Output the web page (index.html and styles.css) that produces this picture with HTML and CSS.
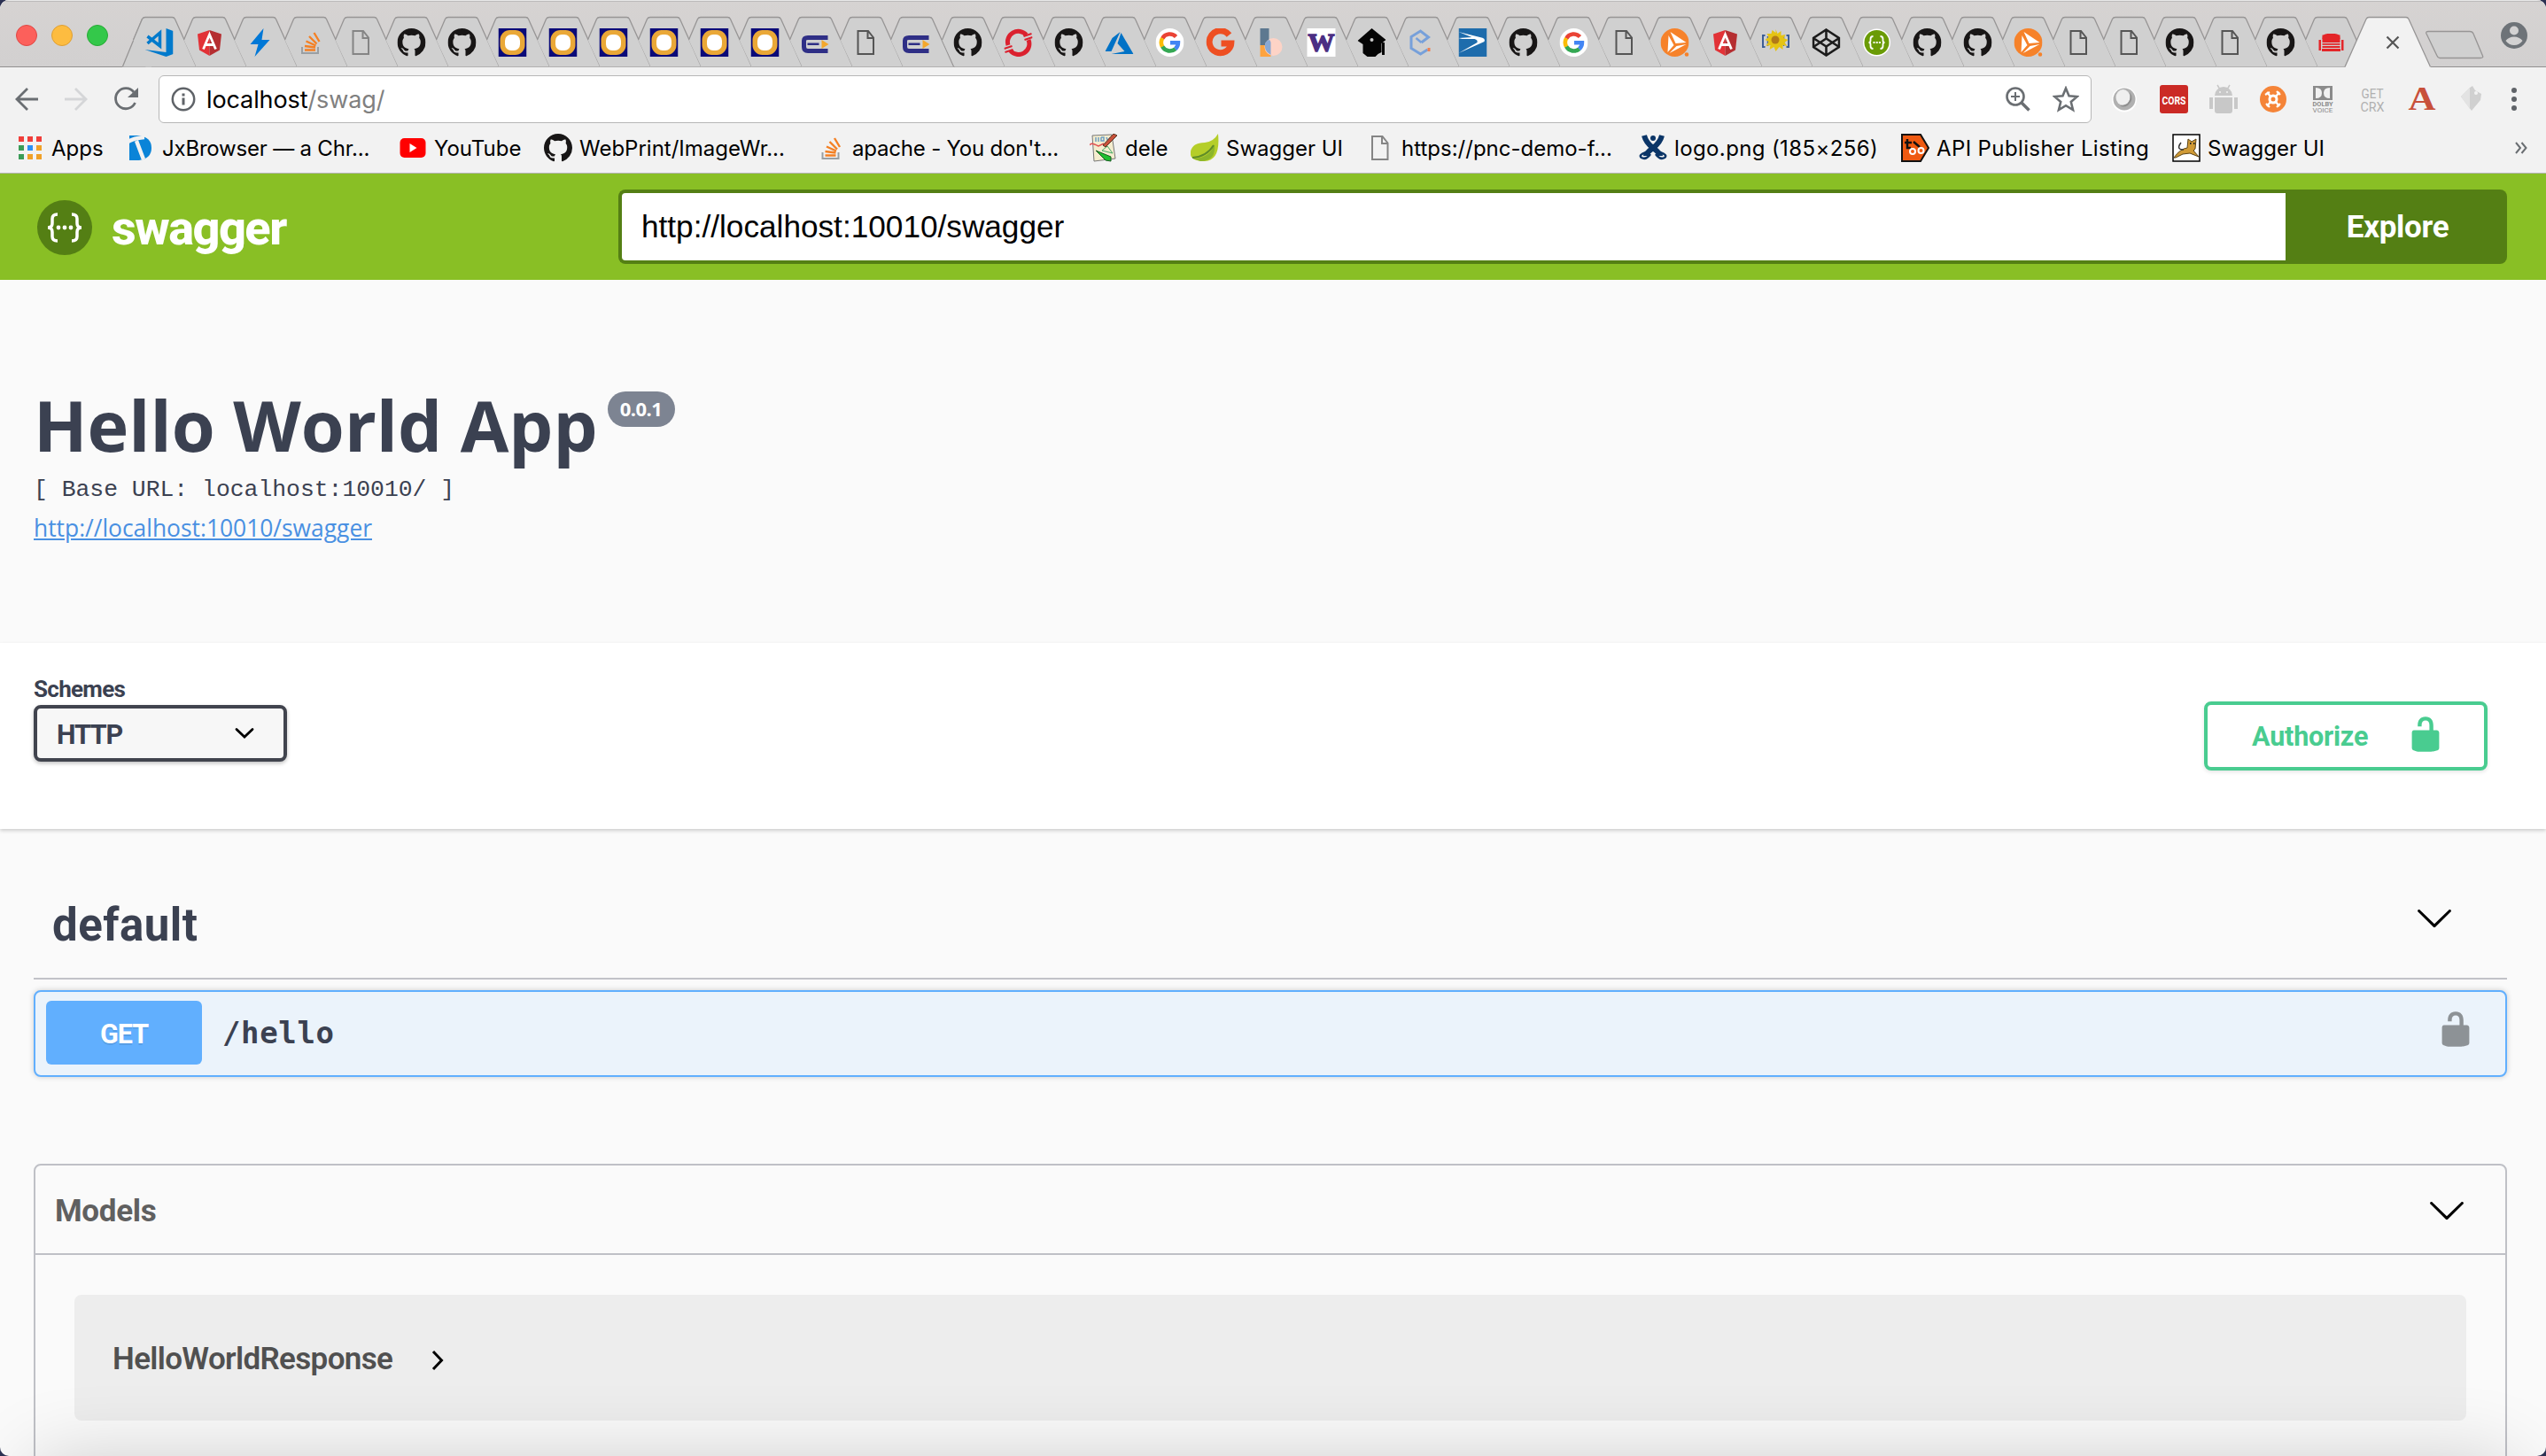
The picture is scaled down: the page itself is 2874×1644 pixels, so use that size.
FILE: index.html
```html
<!DOCTYPE html>
<html lang="en">
<head>
<meta charset="utf-8">
<title>Swagger UI</title>
<link rel="stylesheet" href="styles.css">
</head>
<body>
<svg class="defs" aria-hidden="true">
  <symbol id="shape" viewBox="0 0 57 76" overflow="visible"><path d="M-.5 45L9.500 21.500Q10.500 19.500 13 19.500H43.500Q45.500 19.500 46.500 21.500L71 75.500H13.500Z" fill="#d0d0d0"/><path d="M-.5 45L9.500 21.500Q10.500 19.500 13 19.500H43.500Q45.500 19.500 46.500 21.500L70.500 75" fill="none" stroke="#979595" stroke-width="1.300"/></symbol>
  <symbol id="vscode" viewBox="0 0 32 32"><path d="M24 0l8 3v26l-8 3L0 24l24 3z" fill="#007acc"/><path d="M3 9l14 11V5L3 17" fill="none" stroke="#007acc" stroke-width="3.500"/></symbol>
  <symbol id="angular" viewBox="0 0 32 32"><path d="M16 2L2.500 6.500l2 18L16 31z" fill="#e23237"/><path d="M16 2l13.500 4.500-2 18L16 31z" fill="#b52e31"/><path d="M9 23.500L16 7l7 16.500M11.500 18.500h9" fill="none" stroke="#fff" stroke-width="2.800"/></symbol>
  <symbol id="bolt" viewBox="0 0 32 32"><path d="M20 0L5 18h9L10 32l17-19h-9z" fill="#0078d7"/></symbol>
  <symbol id="stack" viewBox="0 0 32 32"><path d="M6.500 21v7h18v-7" fill="none" stroke="#9a9fa3" stroke-width="2"/><path d="M9.500 24.500h12M9.500 20l12 1.500M11 14.500l11 5M14.500 9l8.500 8.500M20 5l6 10" fill="none" stroke="#f48024" stroke-width="2.400"/></symbol>
  <symbol id="page" viewBox="0 0 32 32"><path d="M7 3h11.500l6 7.500V29H7zM18 3v8h6.500" fill="none" stroke="#555" stroke-width="2"/></symbol>
  <symbol id="page-light" viewBox="0 0 32 32"><path d="M7 3h11.500l6 7.500V29H7zM18 3v8h6.500" fill="none" stroke="#858585" stroke-width="2"/></symbol>
  <symbol id="github" viewBox="0 0 16 16"><path fill="#181616" d="M8 0C3.580 0 0 3.580 0 8c0 3.540 2.290 6.530 5.470 7.590.4.070.55-.17.55-.38 0-.19-.01-.82-.01-1.490-2.010.37-2.530-.49-2.690-.94-.09-.23-.48-.94-.82-1.130-.28-.15-.68-.52-.01-.53.63-.01 1.080.58 1.230.82.72 1.210 1.870.87 2.330.66.070-.52.28-.87.51-1.070-1.780-.2-3.640-.89-3.640-3.950 0-.87.31-1.590.82-2.150-.08-.2-.36-1.020.080-2.120 0 0 .67-.21 2.200.82.64-.18 1.320-.27 2-.27.68 0 1.360.090 2 .27 1.530-1.040 2.200-.82 2.200-.82.44 1.100.16 1.920.080 2.120.51.56.82 1.270.82 2.150 0 3.070-1.870 3.750-3.650 3.950.29.25.54.73.54 1.480 0 1.070-.01 1.930-.01 2.200 0 .21.15.46.55.38A8.013 8.013 0 0016 8c0-4.420-3.580-8-8-8z"/></symbol>
  <symbol id="sun" viewBox="0 0 32 32"><path d="M0 0h32v32H0z" fill="#0a0a78"/><rect x="2" y="2" width="28" height="28" rx="11" fill="#eaa837"/><rect x="7.500" y="7" width="17" height="18" rx="7" fill="#fff"/></symbol>
  <symbol id="e-mark" viewBox="0 0 32 32"><path d="M30 10.500H7.500Q3 10.500 3 14v7q0 4.500 4.500 4.500H30" fill="none" stroke="#2f2f86" stroke-width="5"/><path d="M7 17.800h13" stroke="#2f2f86" stroke-width="2.500"/><path d="M23 13l8 5-8 5z" fill="#f4a72c"/></symbol>
  <symbol id="openshift" viewBox="0 0 32 32"><path d="M4.500 19A12 12 0 0 1 25 7.500M27.500 13A12 12 0 0 1 7 25" fill="none" stroke="#db212f" stroke-width="5"/><path d="M0 23l9-3M1 27l9-3M22 9l9-3M23 13l9-3" stroke="#db212f" stroke-width="2"/></symbol>
  <symbol id="azure" viewBox="0 0 32 32"><path d="M17 4L8 11 0 26h7zM18 5l14 24H7l15-3-8-9z" fill="#0072c6"/></symbol>
  <symbol id="google" viewBox="0 0 32 32"><circle cx="16" cy="16" r="16" fill="#fff"/><g fill="none" stroke-width="4.600"><path d="M23 9.500A9.600 9.600 0 0 0 7.700 11.300" stroke="#ea4335"/><path d="M7.700 11.200a9.600 9.600 0 0 0 0 9.600" stroke="#fbbc05"/><path d="M7.700 20.700a9.600 9.600 0 0 0 14.600 2.500" stroke="#34a853"/><path d="M22.200 23.300a9.600 9.600 0 0 0 3.200-7.100H16.500" stroke="#4285f4"/></g></symbol>
  <symbol id="g-orange" viewBox="0 0 32 32"><path d="M26 7.500A12.500 12.500 0 1 0 28.500 17H17" fill="none" stroke="#ee4f22" stroke-width="7"/></symbol>
  <symbol id="b-shapes" viewBox="0 0 32 32"><path d="M4 0h10v19H4z" fill="#5d7890"/><path d="M4 19h12v13H4z" fill="#fda33f"/><circle cx="19" cy="21" r="10" fill="#fdd3c6"/><path d="M10 16q5-6 6 0v14q-9-5-6-14" fill="#89a8d3"/></symbol>
  <symbol id="cap" viewBox="0 0 32 32"><path d="M16 0l16 13-5 4v10l-4 2-3 3H11l-5-4V18l-6-4z" fill="#050505"/><circle cx="16" cy="13" r="2" fill="#ccc"/><path d="M29 16v14" stroke="#050505" stroke-width="3"/></symbol>
  <symbol id="c-hex" viewBox="0 0 32 32"><path d="M15 16l8-6-9-7L3.500 9.500v13L14 29l8-5" fill="none" stroke="#77a0da" stroke-width="3"/><path d="M9 11l6 5" stroke="#77a0da" stroke-width="2.400"/><path d="M22 22h3v4h-3z" fill="#f08050"/></symbol>
  <symbol id="usps" viewBox="0 0 32 32"><path d="M0 0h32v32H0z" fill="#1e6cac"/><path d="M0 4l24 6q7 1 5 5L0 28l21-12q1-3-3-4H4L0 11l15-1z" fill="#fff"/></symbol>
  <symbol id="play" viewBox="0 0 32 32"><circle cx="16" cy="16" r="16" fill="#f6822a"/><path d="M11 4l18 12-12 1zM9 8l6 11-7 8zM10 28l8-8 11-2z" fill="#fff"/><circle cx="29.500" cy="29.500" r="2.300" fill="#f6822a"/></symbol>
  <symbol id="flower" viewBox="0 0 32 32"><path d="M4 8H1.500v13H4M28 8h2.500v13H28" fill="none" stroke="#3d5e96" stroke-width="2"/><path d="M7 9v11M25 9v11" stroke="#3d5e96" stroke-width="1.500"/><path d="M16 1l2 5 4-3v5l5-1-2 4 5 2-4 3 3 4-5-1v5l-4-3-4 5-2-5-5 3 1-5-5 1 3-5-4-2 4-3-2-4h5l1-4 4 3z" fill="#e5c414"/><circle cx="15.500" cy="13" r="4.500" fill="#b27a18"/></symbol>
  <symbol id="codepen" viewBox="0 0 32 32"><path d="M16 1.500L30.500 11v10L16 30.500 1.500 21V11zM1.500 11L16 20.500 30.500 11M1.500 21L16 11.500 30.500 21M16 1.500v10M16 20.500v10" fill="none" stroke="#1c1c1c" stroke-width="2.600"/></symbol>
  <symbol id="swag" viewBox="0 0 32 32"><circle cx="16" cy="16" r="15.500" fill="#fff"/><circle cx="16" cy="16" r="14" fill="#6a9b05"/><path d="M12 9q-3 0-3 3v2q0 2-2 2 2 0 2 2v2q0 3 3 3M20 9q3 0 3 3v2q0 2 2 2-2 0-2 2v2q0 3-3 3" fill="none" stroke="#fff" stroke-width="1.800"/><path d="M12 16h8.500" stroke="#fff" stroke-width="2" stroke-dasharray="2 1.200"/></symbol>
  <symbol id="couch" viewBox="0 0 32 32"><path d="M6 12q0-6 6-6h8q6 0 6 6z" fill="#e42528"/><path d="M6 7.500h20V16H6z" fill="#e42528"/><path d="M6 17.800h20M6 21h20" stroke="#e42528" stroke-width="1.800"/><path d="M2 13h2.500v12H2zM27.500 13H30v12h-2.500zM5.500 23h21v3h-21z" fill="#e42528"/></symbol>
  <symbol id="tech" viewBox="0 0 32 32"><path d="M3 2h11q14 2 14 14T14 30H3z" fill="#0a84d8"/><path d="M0 10q7-5 20-6M11 8l8 21" fill="none" stroke="#f2f2f2" stroke-width="4.500"/></symbol>
  <symbol id="youtube" viewBox="0 0 32 32"><rect x="1.500" y="5" width="29" height="22" rx="5" fill="#f00"/><path d="M12.500 11l8 5-8 5z" fill="#fff"/></symbol>
  <symbol id="apps" viewBox="0 0 32 32"><path d="M3 3h6v6H3zM13 3h6v6h-6zM23 3h6v6h-6z" fill="#f03e3a"/><path d="M3 13h6v6H3zM3 23h6v6H3z" fill="#3a9c57"/><path d="M13 13h6v6h-6z" fill="#2c90f4"/><path d="M23 13h6v6h-6zM13 23h6v6h-6zM23 23h6v6h-6z" fill="#f0a127"/></symbol>
  <symbol id="notes" viewBox="0 0 32 32"><path d="M3 2l22-1 4 27-24 3z" fill="#f4edcf" stroke="#777" stroke-width="1"/><path d="M7 4v5M10 4v5M13 4v4h3V4h-3M19 4l2 5 2-5" fill="none" stroke="#6d9fc4" stroke-width="1.500"/><path d="M1 13q-1-4 9 1l6-3" fill="none" stroke="#e25050" stroke-width="1.500"/><path d="M20 14l6 8-12-3z" fill="none" stroke="#4a6" stroke-width="1"/><path d="M31 2L18 15l-3-2L27 0z" fill="#c8513a" stroke="#532" stroke-width="1"/><path d="M7 19l17 7v5l-6-1z" fill="#20c030" stroke="#185a20" stroke-width="1"/></symbol>
  <symbol id="leaf" viewBox="0 0 32 32"><path d="M31 0q3 30-15 31Q-2 31 0 20 2 10 16 10q10-1 15-10z" fill="#b5ce29"/><path d="M3 28q18 0 24-16 2 19-16 19z" fill="#8cb52a"/><path d="M2 27q16-1 24-14" fill="none" stroke="#5f8c28" stroke-width="2"/></symbol>
  <symbol id="xmark" viewBox="0 0 32 32"><path d="M6 2q2 8 10 14t8 9M26 2q-2 8-10 14t-8 9" fill="none" stroke="#0b3567" stroke-width="6"/><circle cx="16" cy="5" r="3" fill="#0b3567"/><path d="M8 21q-9 3-5 6 5 3 10-4M24 21q9 3 5 6-5 3-10-4" fill="none" stroke="#0b3567" stroke-width="2.500"/></symbol>
  <symbol id="api" viewBox="0 0 32 32"><path d="M1 1h21l9 15-9 15H1z" fill="#ef5a12" stroke="#111" stroke-width="2"/><path d="M4 10h8M7 6v10h4M14 9l7 6" fill="none" stroke="#111" stroke-width="2.500"/><circle cx="13" cy="20" r="3" fill="none" stroke="#fff" stroke-width="2"/><circle cx="22.500" cy="19" r="3" fill="none" stroke="#fff" stroke-width="2"/></symbol>
  <symbol id="cat" viewBox="0 0 32 32"><path d="M1 1h30v30H1z" fill="#fff" stroke="#000" stroke-width="1.500"/><path d="M2 27q7-10 15-11l1-10 4 3 5-3-1 11-2 2 6 7-10-4-8 1-8 4z" fill="#d09a35" stroke="#5a4316" stroke-width="1"/><path d="M13 18Q4 18 10 10" fill="none" stroke="#333" stroke-width="1.500"/><path d="M20 11h1.500M24 11h1.500" stroke="#222" stroke-width="2"/></symbol>
  <symbol id="chevron" viewBox="0 0 20 20"><path d="M17.418 6.109c.272-.268.709-.268.979 0s.271.701 0 .969l-7.908 7.830c-.27.268-.707.268-.979 0l-7.908-7.830c-.27-.268-.27-.701 0-.969.271-.268.709-.268.979 0L10 13.250l7.418-7.141z"/></symbol>
  <symbol id="unlock" viewBox="0 0 20 20"><path d="M15.800 8H14V5.600C14 2.703 12.665 1 10 1 7.334 1 6 2.703 6 5.600V6h2v-.801C8 3.754 8.797 3 10 3c1.203 0 2 .754 2 2.199V8H4c-.553 0-1 .646-1 1.199V17c0 .549.428 1.139.951 1.307l1.197.387C5.672 18.861 6.550 19 7.100 19h5.800c.549 0 1.428-.139 1.951-.307l1.196-.387c.524-.167.953-.757.953-1.306V9.199C17 8.646 16.352 8 15.800 8z"/></symbol>
</svg>

<div class="window">
  <header class="chrome">
    <div class="strip">
      <div class="lights"><i class="light red"></i><i class="light amber"></i><i class="light green"></i></div>
      <div class="tabs">
        <svg class="tab"><path d="M-13 75.500L9.500 21.500H20V75.500Z" fill="#d0d0d0"/><path d="M-12.500 75L9.500 21.500" stroke="#979595" stroke-width="1.300"/><use href="#shape" width="57" height="76"/><use href="#vscode" x="12.500" y="32" width="32" height="32"/></svg>
        <svg class="tab"><use href="#shape" width="57" height="76"/><use href="#angular" x="12.500" y="32" width="32" height="32"/></svg>
        <svg class="tab"><use href="#shape" width="57" height="76"/><use href="#bolt" x="12.500" y="32" width="32" height="32"/></svg>
        <svg class="tab"><use href="#shape" width="57" height="76"/><use href="#stack" x="12.500" y="32" width="32" height="32"/></svg>
        <svg class="tab"><use href="#shape" width="57" height="76"/><use href="#page-light" x="12.500" y="32" width="32" height="32"/></svg>
        <svg class="tab"><use href="#shape" width="57" height="76"/><use href="#github" x="12.500" y="32" width="32" height="32"/></svg>
        <svg class="tab"><use href="#shape" width="57" height="76"/><use href="#github" x="12.500" y="32" width="32" height="32"/></svg>
        <svg class="tab"><use href="#shape" width="57" height="76"/><use href="#sun" x="12.500" y="32" width="32" height="32"/></svg>
        <svg class="tab"><use href="#shape" width="57" height="76"/><use href="#sun" x="12.500" y="32" width="32" height="32"/></svg>
        <svg class="tab"><use href="#shape" width="57" height="76"/><use href="#sun" x="12.500" y="32" width="32" height="32"/></svg>
        <svg class="tab"><use href="#shape" width="57" height="76"/><use href="#sun" x="12.500" y="32" width="32" height="32"/></svg>
        <svg class="tab"><use href="#shape" width="57" height="76"/><use href="#sun" x="12.500" y="32" width="32" height="32"/></svg>
        <svg class="tab"><use href="#shape" width="57" height="76"/><use href="#sun" x="12.500" y="32" width="32" height="32"/></svg>
        <svg class="tab"><use href="#shape" width="57" height="76"/><use href="#e-mark" x="12.500" y="32" width="32" height="32"/></svg>
        <svg class="tab"><use href="#shape" width="57" height="76"/><use href="#page" x="12.500" y="32" width="32" height="32"/></svg>
        <svg class="tab"><use href="#shape" width="57" height="76"/><use href="#e-mark" x="12.500" y="32" width="32" height="32"/></svg>
        <svg class="tab"><use href="#shape" width="57" height="76"/><use href="#github" x="12.500" y="32" width="32" height="32"/></svg>
        <svg class="tab"><use href="#shape" width="57" height="76"/><use href="#openshift" x="12.500" y="32" width="32" height="32"/></svg>
        <svg class="tab"><use href="#shape" width="57" height="76"/><use href="#github" x="12.500" y="32" width="32" height="32"/></svg>
        <svg class="tab"><use href="#shape" width="57" height="76"/><use href="#azure" x="12.500" y="32" width="32" height="32"/></svg>
        <svg class="tab"><use href="#shape" width="57" height="76"/><use href="#google" x="12.500" y="32" width="32" height="32"/></svg>
        <svg class="tab"><use href="#shape" width="57" height="76"/><use href="#g-orange" x="12.500" y="32" width="32" height="32"/></svg>
        <svg class="tab"><use href="#shape" width="57" height="76"/><use href="#b-shapes" x="12.500" y="32" width="32" height="32"/></svg>
        <svg class="tab"><use href="#shape" width="57" height="76"/><path d="M12.500 32h32v32h-32z" fill="#fff"/><text x="28.500" y="58" text-anchor="middle" textLength="30" lengthAdjust="spacingAndGlyphs" class="w-letter">W</text></svg>
        <svg class="tab"><use href="#shape" width="57" height="76"/><use href="#cap" x="12.500" y="32" width="32" height="32"/></svg>
        <svg class="tab"><use href="#shape" width="57" height="76"/><use href="#c-hex" x="12.500" y="32" width="32" height="32"/></svg>
        <svg class="tab"><use href="#shape" width="57" height="76"/><use href="#usps" x="12.500" y="32" width="32" height="32"/></svg>
        <svg class="tab"><use href="#shape" width="57" height="76"/><use href="#github" x="12.500" y="32" width="32" height="32"/></svg>
        <svg class="tab"><use href="#shape" width="57" height="76"/><use href="#google" x="12.500" y="32" width="32" height="32"/></svg>
        <svg class="tab"><use href="#shape" width="57" height="76"/><use href="#page" x="12.500" y="32" width="32" height="32"/></svg>
        <svg class="tab"><use href="#shape" width="57" height="76"/><use href="#play" x="12.500" y="32" width="32" height="32"/></svg>
        <svg class="tab"><use href="#shape" width="57" height="76"/><use href="#angular" x="12.500" y="32" width="32" height="32"/></svg>
        <svg class="tab"><use href="#shape" width="57" height="76"/><use href="#flower" x="12.500" y="32" width="32" height="32"/></svg>
        <svg class="tab"><use href="#shape" width="57" height="76"/><use href="#codepen" x="12.500" y="32" width="32" height="32"/></svg>
        <svg class="tab"><use href="#shape" width="57" height="76"/><use href="#swag" x="12.500" y="32" width="32" height="32"/></svg>
        <svg class="tab"><use href="#shape" width="57" height="76"/><use href="#github" x="12.500" y="32" width="32" height="32"/></svg>
        <svg class="tab"><use href="#shape" width="57" height="76"/><use href="#github" x="12.500" y="32" width="32" height="32"/></svg>
        <svg class="tab"><use href="#shape" width="57" height="76"/><use href="#play" x="12.500" y="32" width="32" height="32"/></svg>
        <svg class="tab"><use href="#shape" width="57" height="76"/><use href="#page" x="12.500" y="32" width="32" height="32"/></svg>
        <svg class="tab"><use href="#shape" width="57" height="76"/><use href="#page" x="12.500" y="32" width="32" height="32"/></svg>
        <svg class="tab"><use href="#shape" width="57" height="76"/><use href="#github" x="12.500" y="32" width="32" height="32"/></svg>
        <svg class="tab"><use href="#shape" width="57" height="76"/><use href="#page" x="12.500" y="32" width="32" height="32"/></svg>
        <svg class="tab"><use href="#shape" width="57" height="76"/><use href="#github" x="12.500" y="32" width="32" height="32"/></svg>
        <svg class="tab"><use href="#shape" width="57" height="76"/><use href="#couch" x="12.500" y="32" width="32" height="32"/></svg>
      </div>
      <svg class="tab-active" viewBox="0 0 98 76"><path d="M0 76L24 21.500Q25 19.500 27 19.500H69Q71 19.500 72 21.500L97 76Z" fill="#f2f2f2"/><path d="M0 75.500L24 21.500Q25 19.500 27 19.500H69Q71 19.500 72 21.500L96.500 75.500" fill="none" stroke="#979595" stroke-width="1.300"/><path d="M47.500 41.500l13 13M60.500 41.500l-13 13" stroke="#555" stroke-width="2.200"/></svg>
      <svg class="tab-new" viewBox="0 0 67 76"><path d="M3 35.500H50Q53 35.500 54 38L64.500 63Q65.500 65.500 62 65.500H16Q14 65.500 13 63L1 38Q0 35.500 3 35.500Z" fill="#d0d0d0" stroke="#979595" stroke-width="1.300"/></svg>
      <svg class="profile" viewBox="0 0 30 30"><circle cx="15" cy="15" r="15" fill="#6e7378"/><circle cx="15" cy="9.500" r="5" fill="#d3d2d2"/><path d="M5.500 21Q9 16.500 15 16.500T24.500 21Q21 26 15 26T5.500 21z" fill="#d3d2d2"/></svg>
    </div>

    <div class="toolbar">
      <svg class="nav" viewBox="0 0 26 26"><path d="M26 13H2M14 1L2 13l12 12" fill="none" stroke="#6a6e72" stroke-width="2.800"/></svg>
      <svg class="nav" viewBox="0 0 26 26"><path d="M0 13h24M12 1l12 12-12 12" fill="none" stroke="#d5d6d8" stroke-width="2.800"/></svg>
      <svg class="nav" viewBox="0 0 26 26"><path d="M22 5A11.500 11.500 0 1 0 23.500 17" fill="none" stroke="#6a6e72" stroke-width="2.800"/><path d="M27 0v11H15z" fill="#6a6e72"/></svg>
      <div class="omnibox">
        <svg class="info-icon" viewBox="0 0 28 28"><circle cx="14" cy="14" r="12.200" fill="none" stroke="#5f6368" stroke-width="2.500"/><path d="M14 12.500v8M14 7.500v3" stroke="#5f6368" stroke-width="3"/></svg>
        <span class="address">localhost<span class="path">/swag/</span></span>
        <svg class="mag" viewBox="0 0 28 28"><circle cx="11" cy="11" r="9.500" fill="none" stroke="#6a6e72" stroke-width="2.600"/><path d="M18 18l8.500 8.500" stroke="#6a6e72" stroke-width="3.500"/><path d="M6 11h10M11 6v10" stroke="#6a6e72" stroke-width="2"/></svg>
        <svg class="star" viewBox="0 0 28 28"><path d="M14 2.500l3.300 8 8.700.7-6.600 5.600 2.100 8.400L14 20.700l-7.500 4.500 2.100-8.400L2 11.200l8.700-.7z" fill="none" stroke="#6a6e72" stroke-width="2.400"/></svg>
      </div>
      <div class="extensions">
        <svg viewBox="0 0 32 32"><circle cx="16" cy="16.500" r="14" fill="#fff"/><circle cx="16" cy="16" r="12.500" fill="#b0b0b0"/><ellipse cx="14.500" cy="14" rx="8" ry="9" fill="#efefef"/><path d="M22 8q6 8-2 15-5 3-9 0 14 0 11-15" fill="#8f8f8f"/></svg>
        <svg viewBox="0 0 32 32"><rect width="32" height="32" rx="3" fill="#cb2a25"/><text x="16" y="21.500" text-anchor="middle" textLength="27" lengthAdjust="spacingAndGlyphs" class="cors">CORS</text></svg>
        <svg viewBox="0 0 32 32"><path d="M6 12a10 10 0 0 1 20 0zM6 14h20v15q0 3-3 3H9q-3 0-3-3zM0 14h4v13H0zM28 14h4v13h-4z" fill="#c8c8c8"/><path d="M9 0l3 5M23 0l-3 5" stroke="#c8c8c8" stroke-width="1.500"/><circle cx="12" cy="8" r="1" fill="#f2f2f2"/><circle cx="20" cy="8" r="1" fill="#f2f2f2"/></svg>
        <svg viewBox="0 0 32 32"><circle cx="16" cy="16" r="15" fill="#f58438"/><circle cx="16" cy="16" r="4" fill="none" stroke="#fff" stroke-width="3"/><path d="M9 8l4 5M23 8l-4 5M9 24l4-5M23 24l-4-5M7 11l5-3M20 7l4 4M8 21l4 4M20 25l4-4" stroke="#fff" stroke-width="2.200"/></svg>
        <svg viewBox="0 0 32 32"><path d="M5 1h22v16H5z" fill="#8b8b8b"/><path d="M8 3q7 0 7 6t-7 6zM24 3q-7 0-7 6t7 6z" fill="#f2f2f2"/><text x="16" y="24" text-anchor="middle" textLength="23" lengthAdjust="spacingAndGlyphs" class="dolby">DOLBY</text><text x="16" y="31" text-anchor="middle" textLength="23" lengthAdjust="spacingAndGlyphs" class="dolby light-text">VOICE</text></svg>
        <svg viewBox="0 0 32 32"><text x="16" y="14.500" text-anchor="middle" textLength="25" lengthAdjust="spacingAndGlyphs" class="crx">GET</text><text x="16" y="30" text-anchor="middle" textLength="27" lengthAdjust="spacingAndGlyphs" class="crx">CRX</text></svg>
        <svg viewBox="0 0 32 32"><text x="16" y="28" text-anchor="middle" textLength="31" lengthAdjust="spacingAndGlyphs" class="a-letter">A</text></svg>
        <svg viewBox="0 0 32 32"><path d="M4 13L14 3l3-2 3 5 7 4-1 7-10 12z" fill="#d0d0d0"/><path d="M14 3v24L4 13z" fill="#e3e3e3"/><circle cx="21" cy="9" r="2" fill="#f2f2f2"/></svg>
      </div>
      <svg class="kebab" viewBox="0 0 8 28"><circle cx="4" cy="4" r="3" fill="#5f6368"/><circle cx="4" cy="14" r="3" fill="#5f6368"/><circle cx="4" cy="24" r="3" fill="#5f6368"/></svg>
    </div>

    <nav class="bookmarks">
      <a class="bookmark"><svg><use href="#apps"/></svg>Apps</a>
      <a class="bookmark tight"><svg><use href="#tech"/></svg>JxBrowser — a Chr...</a>
      <a class="bookmark"><svg><use href="#youtube"/></svg>YouTube</a>
      <a class="bookmark"><svg><use href="#github"/></svg>WebPrint/ImageWr...</a>
      <a class="bookmark tight"><svg><use href="#stack"/></svg>apache - You don't...</a>
      <a class="bookmark"><svg><use href="#notes"/></svg>dele</a>
      <a class="bookmark"><svg><use href="#leaf"/></svg>Swagger UI</a>
      <a class="bookmark"><svg><use href="#page-light"/></svg>https://pnc-demo-f...</a>
      <a class="bookmark loose"><svg><use href="#xmark"/></svg>logo.png (185×256)</a>
      <a class="bookmark loose"><svg><use href="#api"/></svg>API Publisher Listing</a>
      <a class="bookmark"><svg><use href="#cat"/></svg>Swagger UI</a>
      <svg class="more" viewBox="0 0 14 14"><path d="M1 1l5 6-5 6M7.500 1l5 6-5 6" fill="none" stroke="#6a6e72" stroke-width="2"/></svg>
    </nav>
  </header>

  <div class="topbar">
    <svg class="logo" viewBox="0 0 62 62"><circle cx="31" cy="31" r="31" fill="#547f14"/><path d="M23 16q-6 0-6 5v5q0 5-5 5 5 0 5 5v5q0 5 6 5M39 16q6 0 6 5v5q0 5 5 5-5 0-5 5v5q0 5-6 5" fill="none" stroke="#fff" stroke-width="3.500"/><circle cx="24" cy="31" r="2.400" fill="#fff"/><circle cx="31" cy="31" r="2.400" fill="#fff"/><circle cx="38" cy="31" r="2.400" fill="#fff"/></svg>
    <span class="brand">swagger</span>
    <div class="url-field">http://localhost:10010/swagger</div>
    <div class="explore">Explore</div>
  </div>

  <section class="info">
    <div class="title-row"><h1 class="title">Hello World App</h1><span class="version">0.0.1</span></div>
    <div class="base-url">[ Base URL: localhost:10010/ ]</div>
    <a class="spec-link">http://localhost:10010/swagger</a>
  </section>

  <section class="schemes">
    <div class="scheme-col">
      <div class="scheme-label">Schemes</div>
      <div class="select"><span class="select-text">HTTP</span><svg viewBox="0 0 24 16"><path d="M3 3.500l9 8.500 9-8.500" fill="none" stroke="#000" stroke-width="2.800" stroke-linecap="round"/></svg></div>
    </div>
    <div class="authorize"><span class="authorize-text">Authorize</span><svg class="icon"><use href="#unlock"/></svg></div>
  </section>

  <main class="main">
    <div class="tag"><h2 class="tag-name">default</h2><svg class="icon"><use href="#chevron"/></svg></div>
    <div class="opblock">
      <span class="method">GET</span>
      <span class="op-path">/hello</span>
      <svg class="icon lock"><use href="#unlock"/></svg>
    </div>
    <section class="models">
      <div class="models-head"><h3 class="models-title">Models</h3><svg class="icon"><use href="#chevron"/></svg></div>
      <div class="models-body">
        <div class="model"><span class="model-name">HelloWorldResponse</span><svg viewBox="0 0 14 24"><path d="M2 2l9.500 10L2 22" fill="none" stroke="#000" stroke-width="3"/></svg></div>
      </div>
    </section>
  </main>
  <div class="edge-shade"></div>
</div>
</body>
</html>
```
FILE: styles.css
```css
* { box-sizing: border-box; }
body { margin: 0; background: #2c3152; overflow: hidden; }
h1, h2, h3 { margin: 0; }
.defs { position: absolute; width: 0; height: 0; }
.window { position: relative; height: 1644px; overflow: hidden; border-radius: 10px; background: #fafafa; color: #3b4151; font-family: "Open Sans", "Noto Sans", sans-serif; }

/* browser chrome */
.chrome { font-family: Inter, "Liberation Sans", sans-serif; background: #f2f2f2; border-bottom: 1px solid #b6b4b6; height: 196px; }
.strip { display: flex; height: 76px; background: linear-gradient(#d6d3d2, #d2d0d0); border-bottom: 1px solid #929090; box-shadow: inset 0 1px #e8e8e8, inset 0 2px #bcbaba; }
.strip svg { flex: none; height: 76px; overflow: visible; }
.lights { display: flex; gap: 16px; padding: 28px 0 0 18px; width: 151px; flex: none; }
.light { width: 24px; height: 24px; border-radius: 50%; border: 1px solid; }
.red { background: #fc605b; border-color: #df4744; }
.amber { background: #fdbc40; border-color: #de9f34; }
.green { background: #34c84a; border-color: #27aa35; }
.tabs { display: flex; flex: none; }
.tab { width: 57.04px; }
.tab-active { width: 98px; margin-left: -13px; position: relative; }
.tab-new { width: 67px; margin-left: -7.500px; }
.strip .profile { width: 30px; height: 30px; margin: 25px 0 0 18px; }
.w-letter { font: 900 30px "Liberation Serif", serif; fill: #4b2e83; stroke: #4b2e83; stroke-width: 1.500px; }

.toolbar { display: flex; align-items: center; height: 72px; padding-left: 17px; }
.nav { width: 26px; height: 26px; margin-right: 30px; overflow: visible; flex: none; }
.omnibox { display: flex; align-items: center; width: 2182px; height: 54px; margin-left: -6px; padding: 0 13px; border: 1.500px solid #b7b7b7; border-radius: 6px; background: #fff; flex: none; }
.info-icon { width: 28px; height: 28px; margin-right: 12px; }
.address { font-size: 27px; line-height: 36px; margin-top: 1px; letter-spacing: -.1px; color: #000; flex: 1; }
.path { color: #808080; }
.mag { width: 28px; height: 28px; margin-right: 25px; }
.star { width: 30px; height: 30px; }
.extensions { display: flex; gap: 24px; margin-left: 21px; }
.extensions svg { width: 32px; height: 32px; overflow: visible; }
.kebab { width: 8px; height: 28px; margin-left: 28px; }
.cors { font: 700 13px Roboto, sans-serif; fill: #fff; }
.dolby { font: 700 7px Roboto, sans-serif; fill: #8b8b8b; }
.light-text { font-weight: 400; }
.crx { font: 400 15px Roboto, sans-serif; fill: #b0b0b0; }
.a-letter { font: 700 38px "Liberation Serif", serif; fill: #c8503a; }

.bookmarks { display: grid; grid-template-columns: 125px 307px 164px 308px 308px 114px 198px 308px 296px 306px 1fr 35px; align-items: center; height: 38px; padding-left: 18px; }
.bookmark { display: flex; align-items: center; gap: 8px; font-size: 24px; color: #000; white-space: nowrap; }
.bookmark svg { width: 32px; height: 32px; flex: none; }
.tight { letter-spacing: -.2px; }
.loose { letter-spacing: .38px; }
.more { width: 14px; height: 14px; }

/* page header */
.topbar { display: flex; align-items: center; height: 120px; padding: 0 44px 0 42px; background: #89bf25; }
.logo { width: 62px; height: 62px; margin-bottom: -2px; }
.brand { width: 572px; margin: 4px 0 0 22px; font: 800 54px/60px Roboto, sans-serif; letter-spacing: -1.500px; color: #fff; }
.url-field { flex: 1; height: 84px; padding-left: 22px; border: 4px solid #547f14; border-right: 0; border-radius: 8px 0 0 8px; background: #fff; font: 35.200px/76px "Liberation Sans", sans-serif; color: #000; }
.explore { width: 250px; height: 84px; padding: 1px 0 0 3px; border-radius: 0 8px 8px 0; background: #547f14; color: #fff; font: 700 35px/83px Roboto, sans-serif; letter-spacing: -.3px; text-align: center; }

.info { height: 410px; padding: 113px 38px 0; }
.title-row { display: flex; align-items: flex-start; }
.title { font-size: 79.200px; line-height: 100px; font-weight: 700; }
.version { margin: 13px 0 0 11px; width: 76px; height: 40px; border-radius: 20px; background: #7d8492; color: #fff; font-size: 22px; line-height: 39px; font-weight: 700; letter-spacing: -.5px; text-align: center; }
.base-url { margin-top: 6px; font: 26.400px/36px "Liberation Mono", monospace; white-space: pre; }
.spec-link { display: block; margin-top: 5px; font-size: 26.400px; line-height: 40px; color: #4990e2; text-decoration: underline; }

.schemes { display: flex; justify-content: space-between; align-items: flex-start; height: 210px; padding: 35px 66px 0 38px; background: #fff; box-shadow: 0 2px 4px rgba(0, 0, 0, .18); }
.scheme-label { padding-top: 2px; font: 700 26px/30px Roboto, sans-serif; letter-spacing: -.7px; }
.select { display: flex; align-items: center; justify-content: space-between; width: 286px; height: 64px; margin-top: 3px; padding: 0 32px 0 22px; border: 4px solid #41444e; border-radius: 8px; background: #f7f7f7; box-shadow: 0 2px 4px rgba(0, 0, 0, .25); }
.select-text { padding-top: 3px; font: 700 30.500px/36px Roboto, sans-serif; letter-spacing: -1.200px; }
.select svg { width: 24px; height: 16px; }
.authorize { display: flex; align-items: center; justify-content: space-between; width: 320px; height: 78px; margin-top: 31px; padding: 0 44px 2px 50px; border: 4px solid #49cc90; border-radius: 8px; box-shadow: 0 2px 4px rgba(0, 0, 0, .1); color: #49cc90; fill: #49cc90; }
.authorize-text { padding-top: 3px; font: 700 30.500px/36px Roboto, sans-serif; letter-spacing: -.2px; }
.icon { width: 44px; height: 44px; flex: none; }
.authorize .icon { margin-bottom: 3px; }

.main { padding: 44px 44px 0 38px; }
.tag { display: flex; align-items: center; justify-content: space-between; height: 126px; padding: 0 60px 0 21px; border-bottom: 2px solid #c1c2c8; }
.tag-name { padding-top: 5px; font: 700 51px/60px Roboto, sans-serif; letter-spacing: .5px; }
.tag .icon { margin-bottom: 12px; }
.opblock { display: flex; align-items: center; height: 98px; margin-top: 12px; padding: 0 34px 2px 12px; border: 2px solid #61affe; border-radius: 8px; background: #ebf3fb; box-shadow: 0 0 6px rgba(0, 0, 0, .19); }
.method { width: 176px; height: 72px; padding-top: 1px; border-radius: 6px; background: #61affe; color: #fff; font: 700 30.500px/73px Roboto, sans-serif; letter-spacing: -1px; text-align: center; text-shadow: 0 2px rgba(0, 0, 0, .1); }
.op-path { flex: 1; margin-left: 23px; font: 700 34px/40px "DejaVu Sans Mono", monospace; letter-spacing: .65px; }
.lock { fill: #8d9296; margin-bottom: 8px; }

.models { margin-top: 98px; height: 500px; border: 2px solid #bfc0c6; border-radius: 8px; }
.models-head { display: flex; align-items: center; justify-content: space-between; height: 101px; padding: 0 44px 0 22px; border-bottom: 2px solid #bfc0c6; color: #606060; }
.models-title { padding-top: 4px; font: 700 35px/40px Roboto, sans-serif; letter-spacing: -.3px; }
.models-body { padding: 45px 44px; }
.model { display: flex; align-items: center; height: 142px; padding-left: 43px; border-radius: 8px; background: #ededed; color: #505050; }
.model-name { width: 316px; padding-top: 3px; font: 600 35px/40px Roboto, sans-serif; letter-spacing: -.65px; white-space: nowrap; }
.model svg { width: 14px; height: 24px; margin: 6px 0 0 44px; }

/* soft darkening along the lower window edge */
.edge-shade { position: absolute; left: 40px; right: 40px; top: 1652px; height: 200px; box-shadow: 0 0 90px rgba(0, 0, 0, .2); }
```
